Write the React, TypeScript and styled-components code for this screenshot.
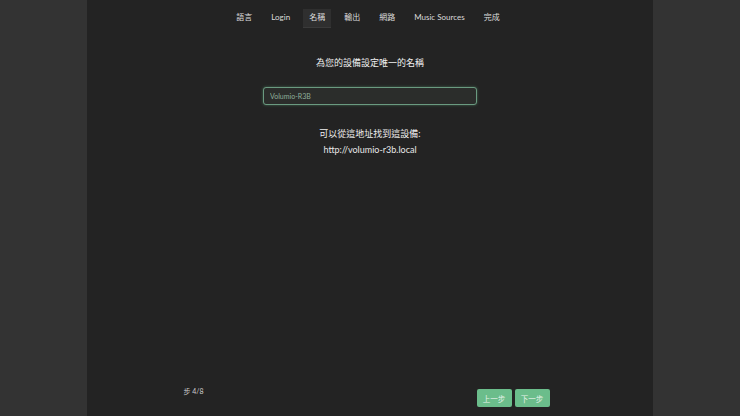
import React from 'react';
import styled, { createGlobalStyle } from 'styled-components';

const GlobalStyle = createGlobalStyle`
  html, body {
    margin: 0;
    padding: 0;
    background: #333333;
    font-family: Lato, "Noto Sans CJK TC", sans-serif;
  }
`;

const tabs = ['語言', 'Login', '名稱', '輸出', '網路', 'Music Sources', '完成'];

export default function App() {
  return (
    <>
      <GlobalStyle />
      <Page>
        <Panel>
          <Nav>
            {tabs.map((t, i) => (
              <Tab key={t} active={i === 2}>{t}</Tab>
            ))}
          </Nav>
          <Content>
            <Title>為您的設備設定唯一的名稱</Title>
            <NameInput defaultValue="Volumio-R3B" />
            <Info>可以從這地址找到這設備:</Info>
            <Address>http://volumio-r3b.local</Address>
          </Content>
          <Footer>
            <Step>步 4/8</Step>
            <Buttons>
              <StepButton>上一步</StepButton>
              <StepButton>下一步</StepButton>
            </Buttons>
          </Footer>
        </Panel>
      </Page>
    </>
  );
}

const Page = styled.div`
  width: 740px;
  height: 416px;
  display: flex;
  justify-content: center;
  background: #333333;
`;

const Panel = styled.div`
  width: 566px;
  height: 416px;
  background: #232323;
  display: flex;
  flex-direction: column;
  align-items: center;
`;

const Nav = styled.div`
  display: flex;
  gap: 7px;
  margin-top: 9px;
  margin-right: 4px;
`;

const Tab = styled.div<{ active?: boolean }>`
  height: 19px;
  line-height: 17px;
  padding: 0 6px;
  font-size: 8px;
  color: #dcdcdc;
  background: ${p => (p.active ? '#2f2f2f' : 'transparent')};
  border-bottom: 1px solid ${p => (p.active ? '#3a3a3a' : 'transparent')};
  box-sizing: border-box;
`;

const Content = styled.div`
  flex: 1;
  display: flex;
  flex-direction: column;
  align-items: center;
  padding-top: 29px;
`;

const Title = styled.div`
  font-size: 9px;
  color: #f0f0f0;
  line-height: 12px;
`;

const NameInput = styled.input`
  margin-top: 18px;
  width: 214px;
  height: 18px;
  box-sizing: border-box;
  background: #2b2d2b;
  border: 1px solid #6a9a80;
  border-radius: 3px;
  box-shadow: 0 0 3px rgba(106, 190, 140, 0.45);
  color: #8fae9a;
  font-family: Lato, sans-serif;
  font-size: 7px;
  padding: 0 6px;
  outline: none;
`;

const Info = styled.div`
  margin-top: 23px;
  font-size: 9px;
  color: #f0f0f0;
  line-height: 12px;
`;

const Address = styled.div`
  margin-top: 4px;
  font-size: 9px;
  color: #e8e8e8;
  line-height: 12px;
`;

const Footer = styled.div`
  width: 366px;
  display: flex;
  justify-content: space-between;
  align-items: flex-start;
  margin-bottom: 9px;
  margin-right: 7px;
`;

const Step = styled.div`
  font-size: 7px;
  color: #cfcfcf;
  line-height: 10px;
`;

const Buttons = styled.div`
  display: flex;
  gap: 3px;
  margin-top: 3px;
`;

const StepButton = styled.button`
  width: 35px;
  height: 18px;
  padding: 0;
  border: none;
  border-radius: 2px;
  background: #6bbd8b;
  color: #e6f3ea;
  font-size: 7.5px;
  font-family: Lato, "Noto Sans CJK TC", sans-serif;
`;
